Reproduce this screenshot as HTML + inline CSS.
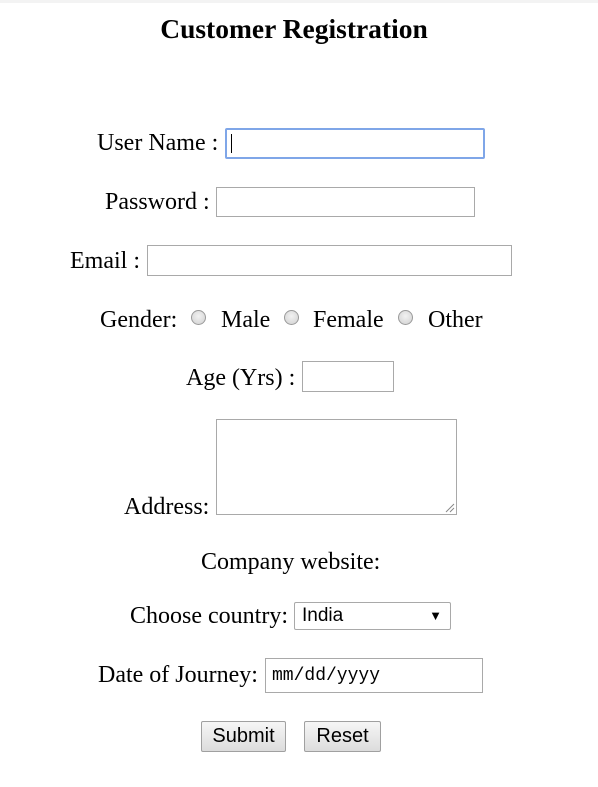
<!DOCTYPE html>
<html><head><meta charset="utf-8"><style>
body{margin:0;width:598px;height:787px;background:#fff;position:relative;overflow:hidden;font-family:"Liberation Serif",serif;color:#000}
.t{position:absolute;font-size:24px;line-height:24px;white-space:nowrap}
.b{position:absolute;box-sizing:border-box;border:1px solid #a9a9a9;background:#fff}
.r{position:absolute;width:15px;height:15px;border-radius:50%;border:1px solid #9a9a9a;background:radial-gradient(circle at 50% 40%,#f2f2f2,#d0d0d0);box-sizing:border-box}
.btn{position:absolute;box-sizing:border-box;border:1px solid #a0a0a0;border-radius:2px;background:linear-gradient(#f6f6f6,#dcdcdc);font-family:"Liberation Sans",sans-serif;font-size:20px;text-align:center;line-height:29px}
</style></head><body>
<div style="position:absolute;top:0;left:0;width:598px;height:3px;background:#f3f3f3"></div>
<div class="t" style="left:0;width:588px;text-align:center;top:15px;font-weight:bold;font-size:27.5px;line-height:27px">Customer Registration</div>

<div class="t" style="left:97px;top:131px">User Name :</div>
<div class="b" style="left:225px;top:128px;width:260px;height:31px;border:2px solid #7fa6e8;border-radius:2px"></div>
<div style="position:absolute;left:231px;top:134px;width:1px;height:19px;background:#000"></div>

<div class="t" style="left:105px;top:190px">Password :</div>
<div class="b" style="left:216px;top:187px;width:259px;height:30px"></div>

<div class="t" style="left:70px;top:249px">Email :</div>
<div class="b" style="left:147px;top:245px;width:365px;height:31px"></div>

<div class="t" style="left:100px;top:308px">Gender:</div>
<div class="r" style="left:191px;top:310px"></div>
<div class="t" style="left:221px;top:308px">Male</div>
<div class="r" style="left:284px;top:310px"></div>
<div class="t" style="left:313px;top:308px">Female</div>
<div class="r" style="left:398px;top:310px"></div>
<div class="t" style="left:428px;top:308px">Other</div>

<div class="t" style="left:186px;top:366px">Age (Yrs) :</div>
<div class="b" style="left:302px;top:361px;width:92px;height:31px"></div>

<div class="t" style="left:124px;top:495px">Address:</div>
<div class="b" style="left:216px;top:419px;width:241px;height:96px"></div>
<svg style="position:absolute;left:445px;top:503px" width="10" height="10"><path d="M1 9L9 1M5 9L9 5" stroke="#888" stroke-width="1"/></svg>

<div class="t" style="left:201px;top:550px">Company website:</div>

<div class="t" style="left:130px;top:604px">Choose country:</div>
<div class="b" style="left:294px;top:602px;width:157px;height:28px;border-radius:2px;font-family:'Liberation Sans',sans-serif;font-size:19px;line-height:26px;padding-left:7px">India<span style="position:absolute;right:8px;top:0;font-size:13px">&#9660;</span></div>

<div class="t" style="left:98px;top:663px">Date of Journey:</div>
<div class="b" style="left:265px;top:658px;width:218px;height:35px;font-family:'Liberation Mono',monospace;font-size:18px;line-height:34px;padding-left:6px">mm/dd/yyyy</div>

<div class="btn" style="left:201px;top:721px;width:85px;height:31px">Submit</div>
<div class="btn" style="left:304px;top:721px;width:77px;height:31px">Reset</div>
</body></html>
